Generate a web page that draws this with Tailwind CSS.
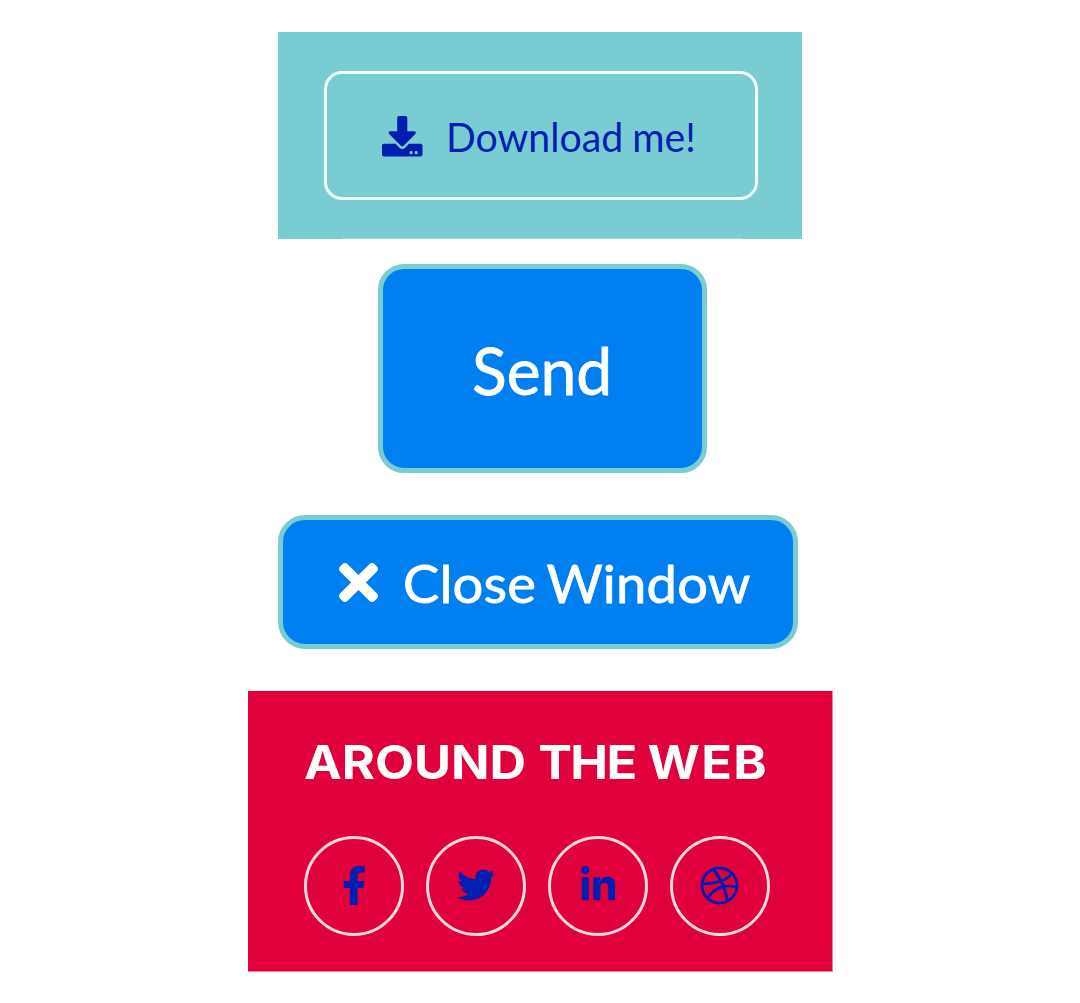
<!DOCTYPE html>
<html lang="en">
<head>
<meta charset="utf-8">
<title>Buttons</title>
<script src="https://cdn.jsdelivr.net/npm/@tailwindcss/browser@4"></script>
</head>
<body class="bg-white">
<main class="flex h-[1003px] w-[1080px] flex-col items-start overflow-hidden pt-8 font-[Lato,sans-serif]">
  <section class="relative ml-[278px] h-[207px] w-[524px] shrink-0 bg-[#79cdd2] pt-[39px] pl-[46px]">
    <button class="flex h-[129px] w-[434px] items-center rounded-[18px] border-3 border-[#f4fbfb] pl-[55px] text-[#001eaf]">
      <svg class="size-[40.5px] shrink-0 translate-y-px" viewBox="0 0 512 512" fill="currentColor"><path d="M216 0h80c13.3 0 24 10.7 24 24v168h87.7c17.8 0 26.7 21.5 14.1 34.1L269.7 378.3c-7.5 7.5-19.8 7.5-27.3 0L90.1 226.1c-12.6-12.6-3.7-34.1 14.1-34.1H192V24c0-13.3 10.7-24 24-24zm296 376v112c0 13.3-10.7 24-24 24H24c-13.3 0-24-10.7-24-24V376c0-13.3 10.7-24 24-24h146.7l49 49c20.1 20.1 52.5 20.1 72.6 0l49-49H488c13.3 0 24 10.7 24 24zm-124 88c0-11-9-20-20-20s-20 9-20 20 9 20 20 20 20-9 20-20zm64 0c0-11-9-20-20-20s-20 9-20 20 9 20 20 20 20-9 20-20z"/></svg>
      <span class="ml-[23px] origin-left scale-x-[0.945] text-[41.5px] leading-[50px] whitespace-nowrap [word-spacing:-1px]">Download me!</span>
    </button>
    <div class="absolute bottom-0 left-16 h-px w-[400px] bg-[#a5dee1]"></div>
  </section>

  <button class="mt-[25px] ml-[377.5px] flex h-[209px] w-[329px] shrink-0 items-center rounded-[26px] border-[5px] border-[#79cdd2] bg-[#0080f0] pl-[89px] text-[65.5px] leading-[80px] text-white">
    <span class="translate-y-px origin-left scale-x-[0.98] whitespace-nowrap [-webkit-text-stroke:0.8px_white]">Send</span>
  </button>

  <button class="mt-[42px] ml-[277.5px] flex h-[134px] w-[520px] shrink-0 items-center rounded-[27px] border-[5px] border-[#79cdd2] bg-[#0080f0] pl-[56px] text-white">
    <svg class="h-[39px] w-[39px] shrink-0" viewBox="0 80 352 352" fill="currentColor"><path d="M242.72 256l100.07-100.07c12.28-12.28 12.28-32.19 0-44.48l-22.24-22.24c-12.28-12.28-32.19-12.28-44.48 0L176 189.28 75.93 89.21c-12.28-12.28-32.19-12.28-44.48 0L9.21 111.45c-12.28 12.28-12.28 32.19 0 44.48L109.28 256 9.21 356.07c-12.28 12.28-12.28 32.19 0 44.48l22.24 22.24c12.28 12.28 32.2 12.28 44.48 0L176 322.72l100.07 100.07c12.28 12.28 32.2 12.28 44.48 0l22.24-22.24c12.28-12.28 12.28-32.19 0-44.48L242.72 256z"/></svg>
    <span class="ml-[25px] translate-y-px origin-left scale-x-[1.045] text-[52px] leading-[62px] tracking-[0.2px] whitespace-nowrap [word-spacing:-3px] [-webkit-text-stroke:0.8px_white]">Close Window</span>
  </button>

  <section class="mt-[42px] ml-[248px] h-[281px] w-[585px] shrink-0 border-r border-b border-[#f0809d] bg-[#e0003c] pt-[40px] pl-[56px]">
    <h2 class="h-[62px] origin-left scale-x-110 font-[Inter,sans-serif] text-[46px] leading-[62px] font-bold whitespace-nowrap text-white">AROUND <span class="tracking-[-1.5px]">THE</span> <span class="tracking-[1.2px]">WEB</span></h2>
    <div class="mt-[43px] flex gap-[21.9px] text-[#001eaf]">
      <a class="flex size-[100px] items-center justify-center rounded-full border-3 border-[#fbdbe3]">
        <svg class="h-[39px] w-[24.4px] -translate-y-px" viewBox="0 0 320 512" fill="currentColor"><path d="M279.14 288l14.22-92.66h-88.91v-60.13c0-25.35 12.42-50.06 52.24-50.06h40.42V6.26S260.43 0 225.36 0c-73.22 0-121.08 44.38-121.08 124.72v70.62H22.89V288h81.39v224h100.17V288z"/></svg>
      </a>
      <a class="flex size-[100px] items-center justify-center rounded-full border-3 border-[#fbdbe3]">
        <svg class="size-[38px] -translate-y-px" viewBox="0 0 512 512" fill="currentColor"><path d="M459.37 151.716c.325 4.548.325 9.097.325 13.645 0 138.72-105.583 298.558-298.558 298.558-59.452 0-114.68-17.219-161.137-47.106 8.447.974 16.568 1.299 25.34 1.299 49.055 0 94.213-16.568 130.274-44.832-46.132-.975-84.792-31.188-98.112-72.772 6.498.974 12.995 1.624 19.818 1.624 9.421 0 18.843-1.3 27.614-3.573-48.081-9.747-84.143-51.98-84.143-102.985v-1.299c13.969 7.797 30.214 12.67 47.431 13.319-28.264-18.843-46.781-51.005-46.781-87.391 0-19.492 5.197-37.36 14.294-52.954 51.655 63.675 129.3 105.258 216.365 109.807-1.624-7.797-2.599-15.918-2.599-24.04 0-57.828 46.782-104.934 104.934-104.934 30.213 0 57.502 12.67 76.67 33.137 23.715-4.548 46.456-13.32 66.599-25.34-7.798 24.366-24.366 44.833-46.132 57.827 21.117-2.273 41.584-8.122 60.426-16.243-14.292 20.791-32.161 39.308-52.628 54.253z"/></svg>
      </a>
      <a class="flex size-[100px] items-center justify-center rounded-full border-3 border-[#fbdbe3]">
        <svg class="h-[39px] w-[34.5px] -translate-y-px" viewBox="0 0 448 512" fill="currentColor"><path d="M100.28 448H7.4V148.9h92.88zM53.79 108.1C24.09 108.1 0 83.5 0 53.8a53.79 53.79 0 0 1 107.58 0c0 29.7-24.1 54.3-53.79 54.3zM447.9 448h-92.68V302.4c0-34.7-.7-79.2-48.29-79.2-48.29 0-55.69 37.7-55.69 76.7V448h-92.78V148.9h89.08v40.8h1.3c12.4-23.5 42.69-48.3 87.88-48.3 94 0 111.28 61.9 111.28 142.3V448z"/></svg>
      </a>
      <a class="flex size-[100px] items-center justify-center rounded-full border-3 border-[#fbdbe3]">
        <svg class="size-[39px] -translate-y-px" viewBox="0 0 512 512" fill="currentColor"><path d="M256 8C119.252 8 8 119.252 8 256s111.252 248 248 248 248-111.252 248-248S392.748 8 256 8zm163.97 114.366c29.503 36.046 47.369 81.957 47.835 131.955-6.984-1.477-77.018-15.682-147.502-6.818-5.752-14.041-11.181-26.393-18.617-41.614 78.321-31.977 113.818-77.482 118.284-83.523zM396.421 97.87c-3.81 5.427-35.697 48.286-111.021 76.519-34.712-63.776-73.185-116.168-79.04-124.008 67.176-16.193 137.966 1.27 190.061 47.489zm-230.48-33.25c5.585 7.659 43.438 60.116 78.537 122.509-99.087 26.313-186.36 25.934-195.834 25.809C62.38 147.205 106.678 92.573 165.941 64.62zM44.17 256.323c0-2.166.043-4.322.108-6.473 9.268.19 111.92 1.513 217.706-30.146 6.064 11.868 11.857 23.915 17.174 35.949-76.599 21.575-146.194 83.527-180.531 142.306C64.794 360.405 44.17 310.73 44.17 256.323zm81.807 167.113c22.127-45.233 82.178-103.622 167.579-132.756 29.74 77.283 42.039 142.053 45.189 160.638-68.112 29.013-150.015 21.053-212.768-27.882zm248.38 8.489c-2.171-12.886-13.446-74.897-41.152-151.033 66.38-10.626 124.7 6.768 131.947 9.055-9.442 58.941-43.273 109.844-90.795 141.978z"/></svg>
      </a>
    </div>
  </section>
</main>
</body>
</html>
